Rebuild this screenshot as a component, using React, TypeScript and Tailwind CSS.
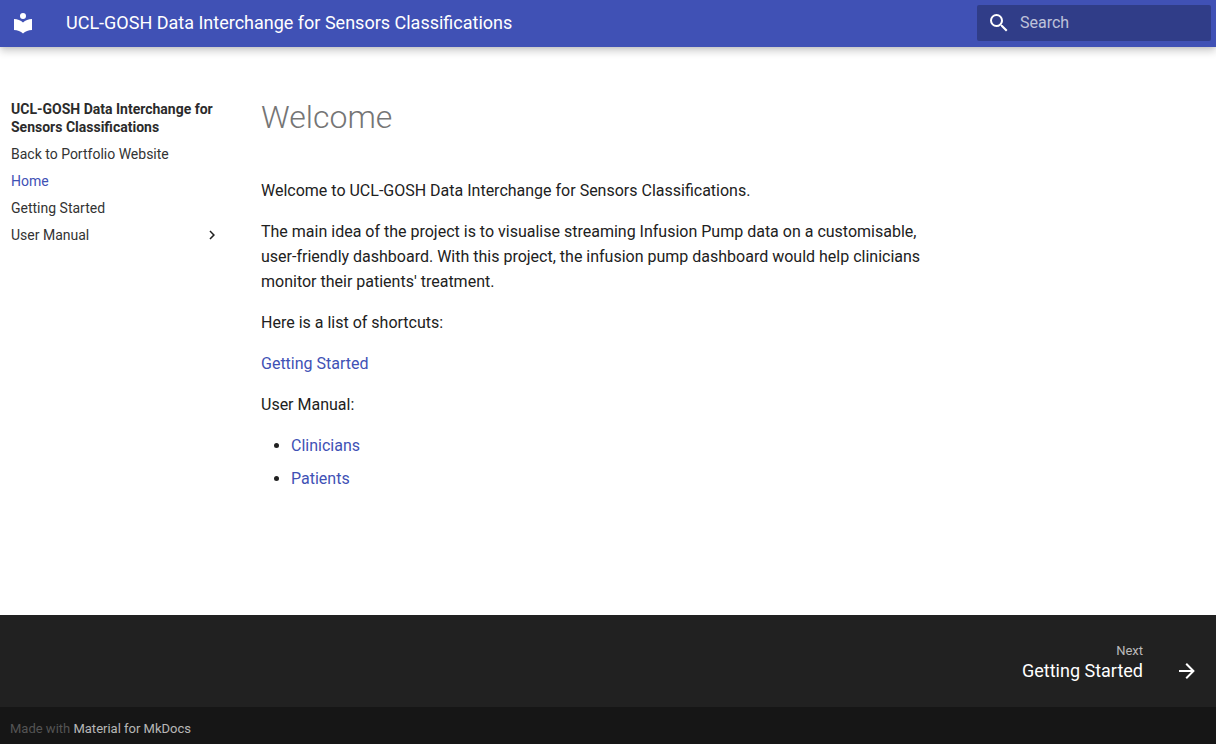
import React from "react";

const navItems = [
  { label: "Back to Portfolio Website", active: false },
  { label: "Home", active: true },
  { label: "Getting Started", active: false },
];

const link = "text-[#4051b5]";

export default function App() {
  return (
    <div className="flex min-h-screen flex-col bg-white font-['Roboto',sans-serif] text-[#212121]">
      <header className="relative z-10 bg-[#4051b5] text-white shadow-[0_0_4px_rgba(0,0,0,0.1),0_4px_8px_rgba(0,0,0,0.2)]">
        <nav className="flex h-[47px] items-center pr-[5px] pb-px" aria-label="Header">
          <a href="#home" aria-label="Home" className="px-[11px]">
            <svg viewBox="0 0 24 24" className="size-6 fill-current">
              <path d="M12 8a3 3 0 0 0 3-3 3 3 0 0 0-3-3 3 3 0 0 0-3 3 3 3 0 0 0 3 3m0 3.54C9.64 9.35 6.5 8 3 8v11c3.5 0 6.64 1.35 9 3.54 2.36-2.19 5.5-3.54 9-3.54V8c-3.5 0-6.64 1.35-9 3.54z" />
            </svg>
          </a>
          <span className="ml-5 flex-1 truncate text-lg">UCL-GOSH Data Interchange for Sensors Classifications</span>
          <label className="flex h-9 w-[234px] items-center rounded-xs bg-[#303d88] pl-[10px]">
            <svg viewBox="0 0 24 24" className="size-6 shrink-0 fill-current">
              <path d="M9.5 3A6.5 6.5 0 0 1 16 9.5c0 1.61-.59 3.09-1.56 4.23l.27.27h.79l5 5-1.5 1.5-5-5v-.79l-.27-.27A6.516 6.516 0 0 1 9.5 16 6.5 6.5 0 0 1 3 9.5 6.5 6.5 0 0 1 9.5 3m0 2C7 5 5 7 5 9.5S7 14 9.5 14 14 12 14 9.5 12 5 9.5 5z" />
            </svg>
            <input type="search" aria-label="Search" placeholder="Search" className="ml-[9px] w-full min-w-0 bg-transparent text-base outline-none placeholder:text-white/70" />
          </label>
        </nav>
      </header>

      <div className="flex flex-1 pt-[53px]">
        <aside className="w-[250px] shrink-0 pr-[29px] pl-[11px] text-sm leading-[18px]">
          <nav aria-label="Navigation">
            <h2 className="font-bold text-[#2b2b2b]">UCL-GOSH Data Interchange for Sensors Classifications</h2>
            <ul className="mt-[9px] flex flex-col gap-[9px] text-[#333333]">
              {navItems.map((item) => (
                <li key={item.label} className="flex">
                  <a href="#page" className={item.active ? link : undefined}>{item.label}</a>
                </li>
              ))}
              <li>
                <button type="button" className="flex w-full items-center justify-between text-left">
                  User Manual
                  <svg viewBox="0 0 24 24" className="size-[18px] fill-[#212121]">
                    <path d="M8.59 16.58 13.17 12 8.59 7.41 10 6l6 6-6 6-1.41-1.42z" />
                  </svg>
                </button>
              </li>
            </ul>
          </nav>
        </aside>
        <main className="min-w-0 flex-1 pr-[285px] pb-[124px] pl-[11px] text-base leading-[25px]">
          <h1 className="mb-11 text-[32px] leading-[34px] font-light text-[#757575]">Welcome</h1>
          <div className="flex flex-col gap-4">
            <p>Welcome to UCL-GOSH Data Interchange for Sensors Classifications.</p>
            <p>The main idea of the project is to visualise streaming Infusion Pump data on a customisable, user-friendly dashboard. With this project, the infusion pump dashboard would help clinicians monitor their patients' treatment.</p>
            <p>Here is a list of shortcuts:</p>
            <p><a href="#getting-started" className={link}>Getting Started</a></p>
            <p>User Manual:</p>
            <ul className="flex list-disc flex-col gap-2 pl-[30px]">
              <li><a href="#clinicians" className={link}>Clinicians</a></li>
              <li><a href="#patients" className={link}>Patients</a></li>
            </ul>
          </div>
        </main>
      </div>

      <footer className="bg-[#212121] text-white">
        <nav className="flex h-[92px] justify-end pr-[17px]" aria-label="Footer">
          <a href="#getting-started" className="flex items-end pb-6">
            <span className="flex flex-col text-right">
              <span className="text-[13px] leading-4 text-white/70">Next</span>
              <span className="text-lg leading-6">Getting Started</span>
            </span>
            <svg viewBox="0 0 24 24" className="ml-8 size-6 fill-current">
              <path d="M4 11v2h12l-5.5 5.5 1.42 1.42L19.84 12l-7.92-7.92L10.5 5.5 16 11H4z" />
            </svg>
          </a>
        </nav>
        <div className="flex h-[37px] items-center bg-[#161616] px-[10px] pt-[6px] text-[13px] text-[#545454]">
          <p>Made with <a href="#mkdocs" className="text-white/70">Material for MkDocs</a></p>
        </div>
      </footer>
    </div>
  );
}
